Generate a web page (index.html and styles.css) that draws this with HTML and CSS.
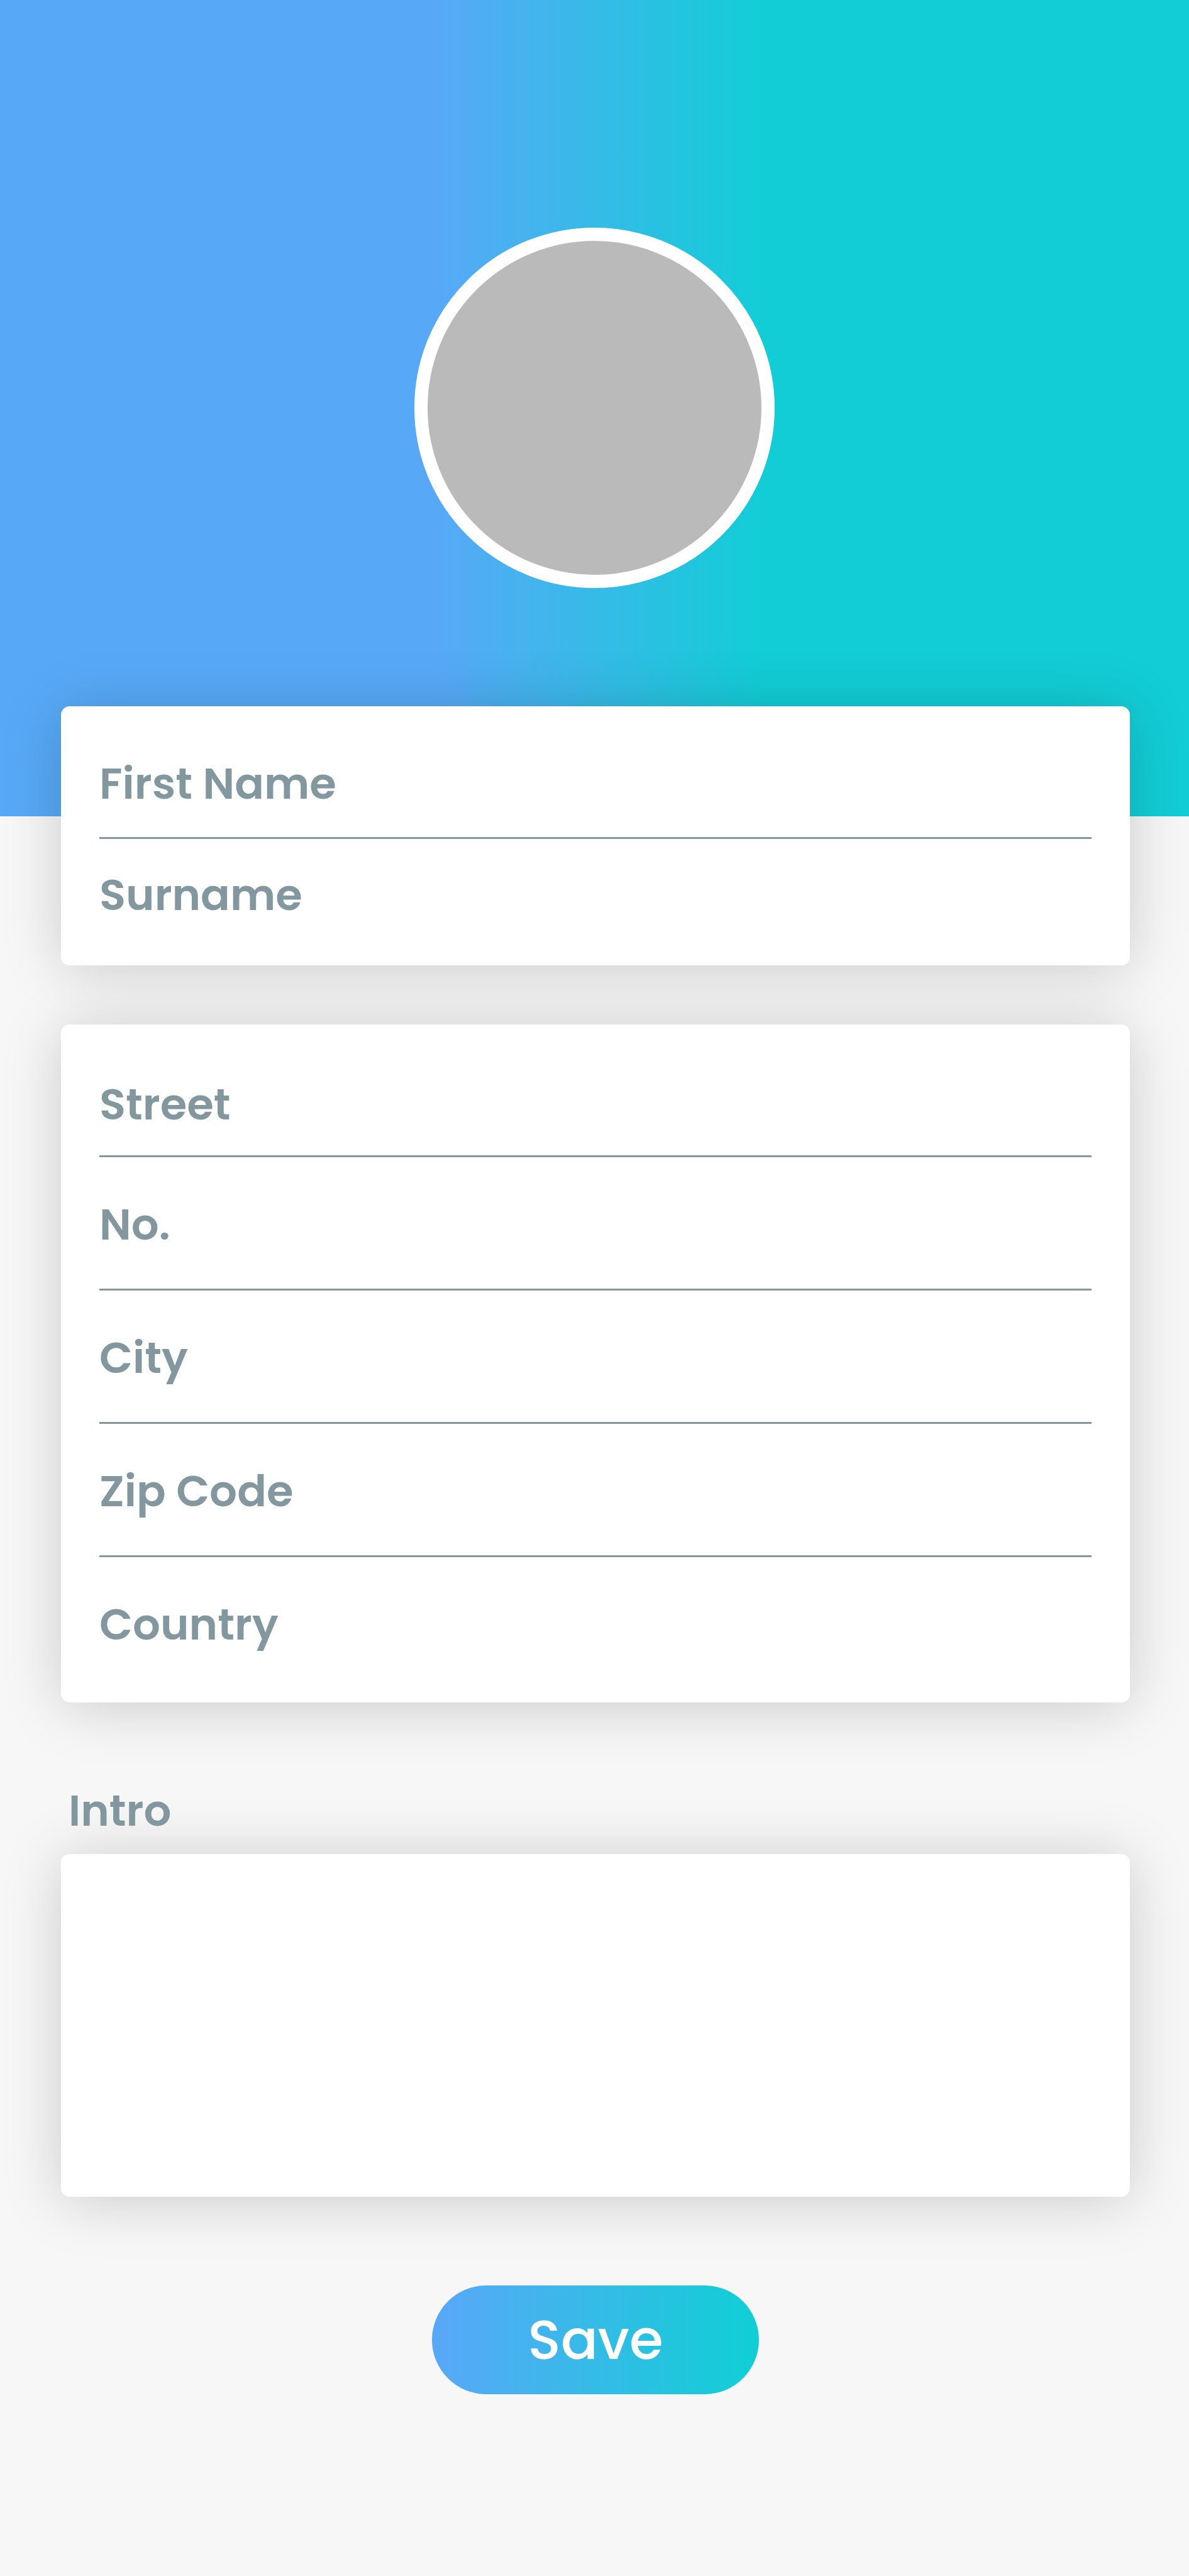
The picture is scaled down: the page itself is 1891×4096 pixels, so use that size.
FILE: index.html
```html
<!DOCTYPE html>
<html lang="en">
<head>
  <meta charset="utf-8">
  <meta name="viewport" content="width=device-width, initial-scale=1">
  <title>Edit profile</title>
  <link rel="stylesheet" href="styles.css">
</head>
<body>
  <header class="hero">
    <div class="avatar" role="img" aria-label="Profile picture"></div>
  </header>
  <form class="profile">
    <div class="card card-name">
      <div class="field">
        <label for="first-name">First Name</label>
        <input id="first-name" type="text">
      </div>
      <div class="field">
        <label for="surname">Surname</label>
        <input id="surname" type="text">
      </div>
    </div>
    <div class="card card-address">
      <div class="field">
        <label for="street">Street</label>
        <input id="street" type="text">
      </div>
      <div class="field">
        <label for="number">No.</label>
        <input id="number" type="text">
      </div>
      <div class="field">
        <label for="city">City</label>
        <input id="city" type="text">
      </div>
      <div class="field">
        <label for="zip">Zip Code</label>
        <input id="zip" type="text">
      </div>
      <div class="field">
        <label for="country">Country</label>
        <input id="country" type="text">
      </div>
    </div>
    <label class="intro-label" for="intro">Intro</label>
    <div class="card card-intro">
      <textarea id="intro"></textarea>
    </div>
    <button class="save" type="submit">Save</button>
  </form>
</body>
</html>
```

FILE: styles.css
```css
:root {
  --blue: #57a9f7;
  --teal: #12cdd6;
  --slate: #83979f;
}

* {
  box-sizing: border-box;
}

body {
  margin: 0;
  background: #f7f7f7;
  color: var(--slate);
  font-family: Poppins, Inter, "Open Sans", sans-serif;
  font-size: 69px;
  font-weight: 600;
  line-height: 80px;
}

.hero {
  display: flex;
  justify-content: center;
  height: 1298px;
  padding-top: 362px;
  background: linear-gradient(90deg, var(--blue) 37%, var(--teal) 64%);
}

.avatar {
  width: 573px;
  height: 573px;
  border: 21px solid #fff;
  border-radius: 50%;
  background: #bababa;
}

.profile {
  display: flex;
  flex-direction: column;
  isolation: isolate;
  margin-top: -175px;
  padding: 0 94px 289px 97px;
}

.card {
  position: relative;
  padding: 0 61px;
  border-radius: 14px;
  background: #fff;
}

/* Shadows sit beneath every card so none falls on a neighbour. */
.card::before {
  content: "";
  position: absolute;
  inset: 0;
  z-index: -1;
  border-radius: 14px;
  box-shadow: 0 6px 96px rgba(0, 0, 0, 0.18);
}

.field {
  display: flex;
  padding: 67px 0 62px;
  border-bottom: 3px solid var(--slate);
}

.field:last-child {
  border-bottom: 0;
}

.field input {
  flex: 1;
  min-width: 0;
  height: 80px;
  margin-left: 32px;
  padding: 0;
  border: 0;
  outline: 0;
  background: transparent;
  color: inherit;
  font: inherit;
}

.card-name .field {
  padding: 49px 0 45px;
}

.card-name .field:first-child {
  padding-top: 83px;
}

.card-name .field:last-child {
  padding-bottom: 72px;
}

.card-address {
  margin-top: 94px;
}

.card-address .field:first-child {
  padding: 87px 0 41px;
}

.card-address .field:last-child {
  padding-bottom: 84px;
}

.intro-label {
  margin: 132px 0 29px;
  padding-left: 12px;
}

.card-intro {
  padding: 48px 61px;
}

.card-intro textarea {
  display: block;
  width: 100%;
  height: 449px;
  padding: 0;
  border: 0;
  outline: 0;
  resize: none;
  background: transparent;
  color: inherit;
  font: inherit;
}

.save {
  align-self: center;
  width: 520px;
  height: 173px;
  margin-top: 141px;
  padding: 0;
  border: 0;
  border-radius: 87px;
  background: linear-gradient(90deg, var(--blue) 4%, var(--teal) 96%);
  color: #fff;
  font: inherit;
  font-size: 87px;
  font-weight: 500;
}
```
